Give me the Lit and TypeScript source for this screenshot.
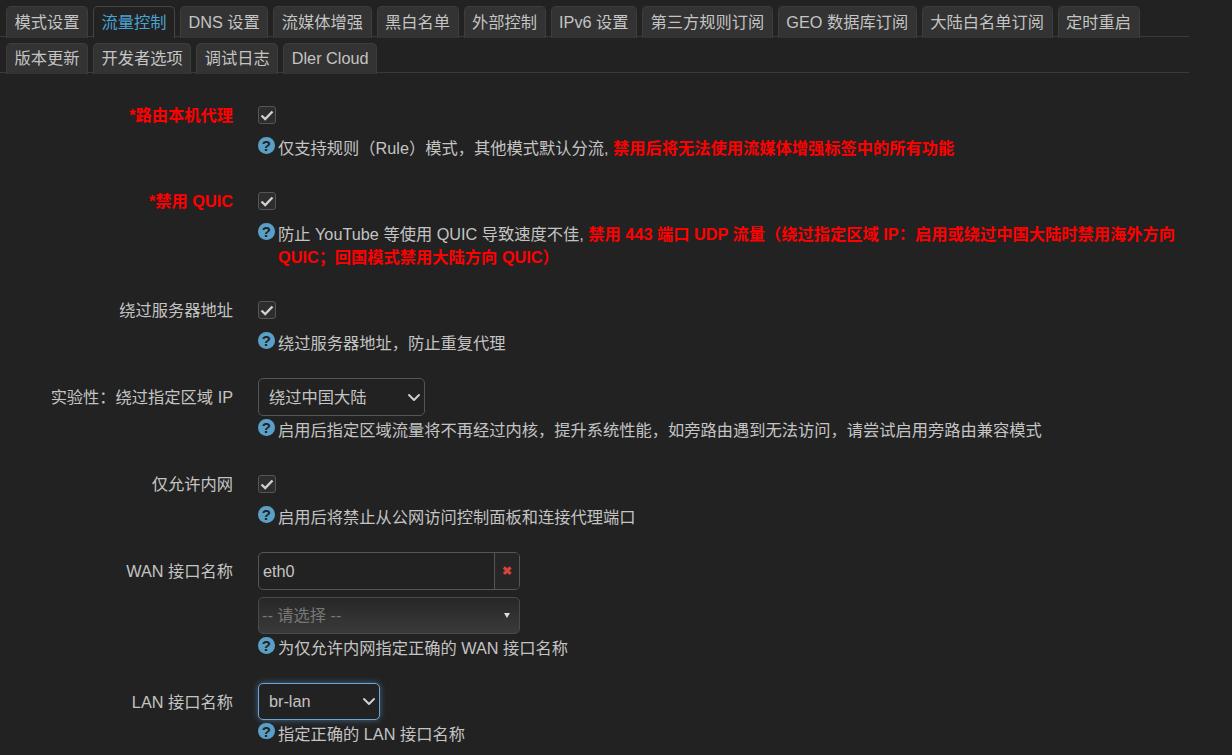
import { LitElement, html, css, svg } from "lit";
import { customElement } from "lit/decorators.js";

const row1 = ["模式设置","流量控制","DNS 设置","流媒体增强","黑白名单","外部控制","IPv6 设置","第三方规则订阅","GEO 数据库订阅","大陆白名单订阅","定时重启"];
const row2 = ["版本更新","开发者选项","调试日志","Dler Cloud"];

const chevron = svg`<svg class="chev" viewBox="0 0 16 16" width="16" height="16"><path d="M3 6 8 11l5-5" fill="none" stroke="#cfcfcf" stroke-width="2" stroke-linecap="round" stroke-linejoin="round"/></svg>`;
const check = html`<span class="check"><svg viewBox="0 0 16 16" width="16" height="16"><path d="M2.500 8.500 6.200 12 13.500 4.500" fill="none" stroke="#d0d0d0" stroke-width="2.400"/></svg></span>`;
const help = html`<span class="help">?</span>`;

@customElement("app-root")
export class AppRoot extends LitElement {
  static styles = css`
    :host { display: block; min-height: 755px; background: #222; color: #c4c4c4; font: 16.25px/23px "Liberation Sans", "Noto Sans CJK SC", sans-serif; overflow: hidden; }
    .tabs { width: 1189px; display: flex; gap: 5px; padding: 6px 0 0 6px; box-sizing: border-box; border-bottom: 1px solid #3a3a3a; height: 37px; }
    .tabs.second { height: 36px; }
    .tab { box-sizing: border-box; height: 31px; padding: 0 7.500px; border: 1px solid #3d3d3d; border-bottom: 0; border-radius: 5px 5px 0 0; background: #333; line-height: 28px; white-space: nowrap; color: #c4c4c4; }
    .tabs:not(.second) .tab { height: 32px; line-height: 31px; }
    .tab.active { background: #222; color: #4ba3d3; border-color: #444; }
    .form { padding-top: 23px; }
    .row { display: grid; grid-template-columns: 233px 1fr; column-gap: 25px; margin-bottom: 22.900px; width: 1189px; }
    .row.tight { margin-bottom: 22.200px; }
    .label { text-align: right; height: 38px; line-height: 38px; }
    .label.red { color: #f00; font-weight: bold; }
    .field { height: 38px; display: flex; align-items: center; }
    .field.short { height: 37px; }
    .stack { display: flex; flex-direction: column; gap: 7px; }
    .desc { margin-top: 3px; padding-left: 20px; position: relative; }
    .desc b { color: #f00; }
    .help { position: absolute; left: 0; top: 0; width: 16.500px; height: 16.500px; border-radius: 50%; background: #5a9fc6; color: #222; font-size: 15px; font-weight: bold; line-height: 17px; text-align: center; }
    .check { display: inline-flex; width: 18px; height: 18px; box-sizing: border-box; align-items: center; justify-content: center; border: 1px solid #555; border-radius: 3px; background: #2d2d2d; }
    .select { box-sizing: border-box; height: 38px; display: flex; align-items: center; justify-content: space-between; padding: 0 2px 0 10px; border: 1px solid #555; border-radius: 5px; background: #222; }
    .w167 { width: 167px; }
    .w122 { width: 122px; height: 37px; border-color: #6aa5d8; box-shadow: 0 0 6px rgba(90,160,220,.55); }
    .input { display: flex; width: 262px; height: 38px; box-sizing: border-box; border: 1px solid #555; border-radius: 5px; }
    .input span:first-child { flex: 1; padding-left: 4px; line-height: 36px; }
    .clear { width: 24px; border-left: 1px solid #555; background: #262626; color: #d9413e; border-radius: 0 4px 4px 0; display: flex; align-items: center; justify-content: center; font-size: 12px; font-weight: bold; }
    .combo { box-sizing: border-box; width: 262px; height: 37px; display: flex; align-items: center; justify-content: space-between; padding: 0 9px 0 3px; border: 1px solid #4a4a4a; border-radius: 5px; background: linear-gradient(#272727, #3a3a3a); color: #777; }
    .caret { width: 0; height: 0; border-style: solid; border-width: 5px 3px 0; border-color: #ddd transparent transparent; }
  `;

  private desc(content: unknown) {
    return html`<div class="desc">${help}${content}</div>`;
  }

  render() {
    return html`
      <div class="tabs">${row1.map((t, i) => html`<div class="tab ${i === 1 ? "active" : ""}">${t}</div>`)}</div>
      <div class="tabs second">${row2.map((t) => html`<div class="tab">${t}</div>`)}</div>
      <div class="form">
        <div class="row tight"><div class="label red">*路由本机代理</div><div>
          <div class="field">${check}</div>
          ${this.desc(html`仅支持规则（Rule）模式，其他模式默认分流, <b>禁用后将无法使用流媒体增强标签中的所有功能</b>`)}
        </div></div>
        <div class="row tight"><div class="label red">*禁用 QUIC</div><div>
          <div class="field">${check}</div>
          ${this.desc(html`防止 YouTube 等使用 QUIC 导致速度不佳, <b>禁用 443 端口 UDP 流量（绕过指定区域 IP：启用或绕过中国大陆时禁用海外方向 QUIC；回国模式禁用大陆方向 QUIC）</b>`)}
        </div></div>
        <div class="row"><div class="label">绕过服务器地址</div><div>
          <div class="field">${check}</div>
          ${this.desc("绕过服务器地址，防止重复代理")}
        </div></div>
        <div class="row"><div class="label">实验性：绕过指定区域 IP</div><div>
          <div class="field"><div class="select w167"><span>绕过中国大陆</span>${chevron}</div></div>
          ${this.desc("启用后指定区域流量将不再经过内核，提升系统性能，如旁路由遇到无法访问，请尝试启用旁路由兼容模式")}
        </div></div>
        <div class="row"><div class="label">仅允许内网</div><div>
          <div class="field">${check}</div>
          ${this.desc("启用后将禁止从公网访问控制面板和连接代理端口")}
        </div></div>
        <div class="row"><div class="label">WAN 接口名称</div><div>
          <div class="stack">
            <div class="input"><span>eth0</span><span class="clear">✖</span></div>
            <div class="combo"><span>-- 请选择 --</span><span class="caret"></span></div>
          </div>
          ${this.desc("为仅允许内网指定正确的 WAN 接口名称")}
        </div></div>
        <div class="row"><div class="label">LAN 接口名称</div><div>
          <div class="field short"><div class="select w122"><span>br-lan</span>${chevron}</div></div>
          ${this.desc("指定正确的 LAN 接口名称")}
        </div></div>
      </div>
    `;
  }
}
